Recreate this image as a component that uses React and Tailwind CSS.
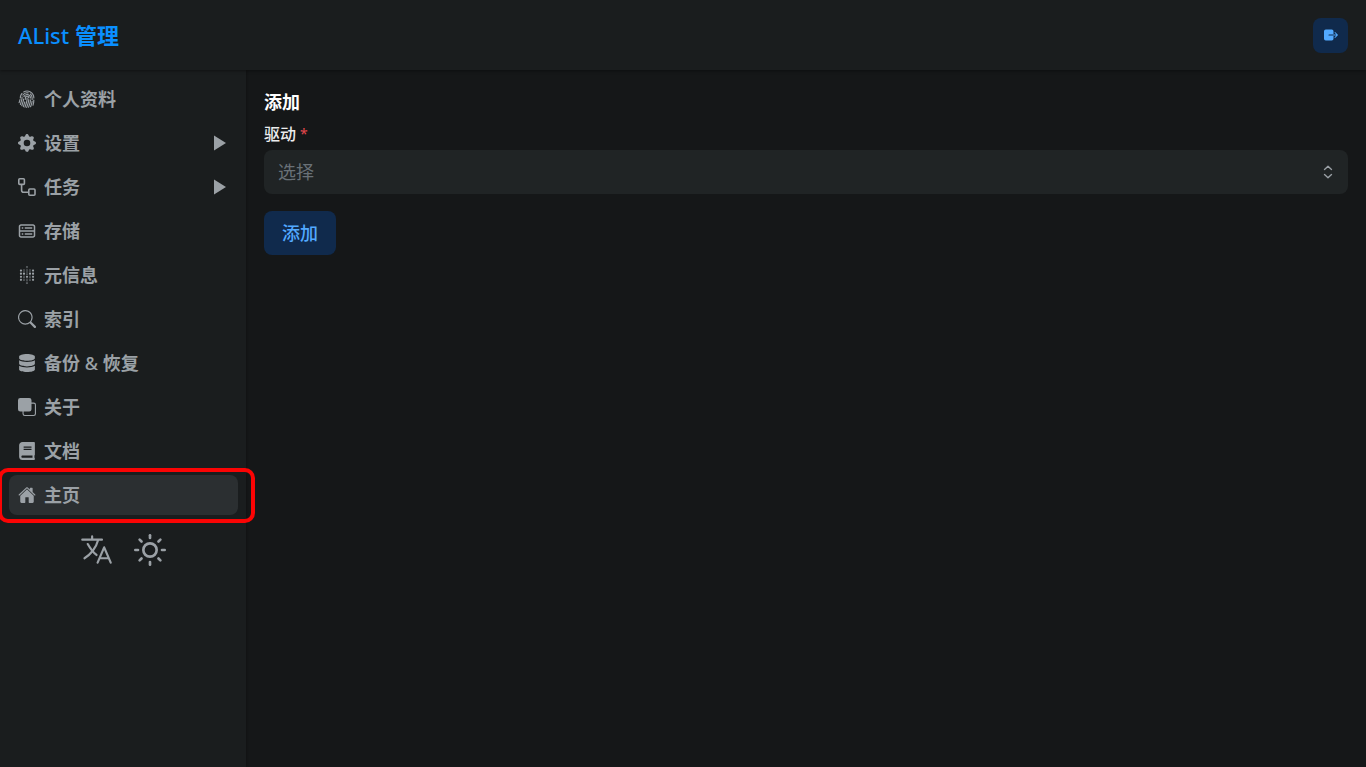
import clsx from "clsx";
import { BsFingerprint, BsFront, BsGearFill, BsSearch } from "react-icons/bs";
import { CgDatabase } from "react-icons/cg";
import { FaBook, FaDatabase } from "react-icons/fa";
import { FiSun } from "react-icons/fi";
import { IoExit, IoHome, IoLanguageOutline } from "react-icons/io5";
import { SiMetabase } from "react-icons/si";

const menuItems = [
  { key: "profile", title: "个人资料", icon: BsFingerprint },
  { key: "settings", title: "设置", icon: BsGearFill, nested: true },
  { key: "tasks", title: "任务", icon: WorkflowIcon, nested: true },
  { key: "storages", title: "存储", icon: CgDatabase },
  { key: "metas", title: "元信息", icon: SiMetabase },
  { key: "indexes", title: "索引", icon: BsSearch },
  {
    key: "backup",
    title: (
      <>
        备份 <span className="font-medium">&amp;</span> 恢复
      </>
    ),
    icon: FaDatabase
  },
  { key: "about", title: "关于", icon: BsFront },
  { key: "docs", title: "文档", icon: FaBook },
  { key: "home", title: "主页", icon: IoHome, active: true }
];

function WorkflowIcon({ size, className }) {
  return (
    <svg
      viewBox="0 0 18 18"
      width={size}
      height={size}
      className={className}
      fill="none"
      stroke="currentColor"
      strokeWidth="1.6"
      aria-hidden="true"
    >
      <rect x=".8" y=".8" width="5.6" height="5.6" rx="1" />
      <rect x="10.8" y="11" width="6.2" height="6.2" rx="1" />
      <path d="M3.6 6.4v5.8a2 2 0 0 0 2 2h5.2" />
    </svg>
  );
}

function Caret() {
  return (
    <svg viewBox="0 0 12 16" className="ml-auto h-4 w-3 shrink-0" fill="currentColor" aria-hidden="true">
      <path d="M0 .4 12 8 0 15.6Z" />
    </svg>
  );
}

function MenuItem({ title, icon: Icon, nested, active }) {
  const className = clsx(
    "flex h-10 w-full items-center gap-2 rounded-lg pl-[9px] pr-3 text-left hover:bg-[#2b2f31]",
    active && "bg-[#2b2f31]"
  );
  const content = (
    <>
      <Icon size={18} className="shrink-0" />
      <span>{title}</span>
      {nested ? <Caret /> : null}
    </>
  );

  return (
    <li className="relative">
      {nested ? (
        <button type="button" className={className}>
          {content}
        </button>
      ) : (
        <a href="#" className={className}>
          {content}
        </a>
      )}
      {active ? (
        <div className="pointer-events-none absolute -left-[11px] -right-[17px] -top-[7px] -bottom-2 rounded-[10px] border-4 border-[#fb0404]" />
      ) : null}
    </li>
  );
}

function Header() {
  return (
    <header className="z-10 flex h-[70px] shrink-0 items-center justify-between bg-[#1a1d1e] px-[18px] shadow-[0_1px_3px_rgba(0,0,0,0.4)]">
      <h1 className="text-[22px] font-semibold text-[#0a8fff]">
        <span className="font-medium">AList</span> 管理
      </h1>
      <button
        type="button"
        aria-label="退出登录"
        className="flex size-[35px] items-center justify-center rounded-lg bg-[#102a4c] text-[#52a9ff]"
      >
        <IoExit size={16} />
      </button>
    </header>
  );
}

function Sidebar() {
  return (
    <aside className="w-[246px] shrink-0 bg-[#1a1d1e] pt-[9px] pr-2 pl-[9px] text-[#9ba1a6] shadow-[1px_0_2px_rgba(0,0,0,0.2)]">
      <nav>
        <ul className="flex flex-col gap-1 text-[18px] font-semibold">
          {menuItems.map(({ key, ...item }) => (
            <MenuItem key={key} {...item} />
          ))}
        </ul>
      </nav>
      <div className="mt-[17px] flex items-center justify-center gap-5 pr-0.5">
        <button type="button" aria-label="语言">
          <IoLanguageOutline size={35} />
        </button>
        <button type="button" aria-label="切换主题">
          <FiSun size={32} />
        </button>
      </div>
    </aside>
  );
}

function AddStorage() {
  return (
    <main className="min-w-0 flex-1 p-[18px]">
      <form className="flex flex-col items-start" onSubmit={(event) => event.preventDefault()}>
        <h2 className="text-[18px] leading-7 font-bold text-white">添加</h2>
        <label htmlFor="driver" className="mt-1.5 mb-1 flex gap-1 text-[16px] leading-6 font-medium text-[#ecedee]">
          驱动 <span className="text-[14px] font-normal text-[#e5484d]">*</span>
        </label>
        <div className="relative w-full">
          <select
            id="driver"
            defaultValue=""
            required
            className="h-11 w-full appearance-none rounded-lg bg-[#202425] px-[14px] text-[18px] text-[#697177]"
          >
            <option value="">选择</option>
          </select>
          <svg
            viewBox="0 0 16 16"
            className="pointer-events-none absolute right-3 top-1/2 size-4 -translate-y-1/2 text-[#9ba1a6]"
            fill="none"
            stroke="currentColor"
            strokeWidth="1.4"
            strokeLinecap="round"
            strokeLinejoin="round"
            aria-hidden="true"
          >
            <path d="M4.5 5.4 8 2.2l3.5 3.2M4.5 10.6 8 13.8l3.5-3.2" />
          </svg>
        </div>
        <button
          type="submit"
          className="mt-[17px] h-11 rounded-lg bg-[#102a4c] px-[18px] text-[18px] font-medium text-[#52a9ff]"
        >
          添加
        </button>
      </form>
    </main>
  );
}

export default function App() {
  return (
    <div className="flex min-h-screen flex-col bg-[#151718] font-['Noto_Sans','Noto_Sans_CJK_SC',sans-serif]">
      <Header />
      <div className="flex flex-1">
        <Sidebar />
        <AddStorage />
      </div>
    </div>
  );
}
